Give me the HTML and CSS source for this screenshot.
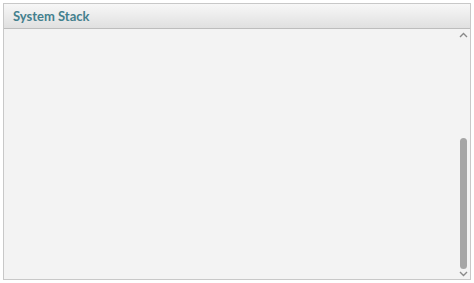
FILE: index.html
```html
<!DOCTYPE html>
<html>
<head>
<meta charset="utf-8">
<link rel="stylesheet" href="styles.css">
</head>
<body>
<div class="panel">
  <div class="header"><span class="title">System Stack</span></div>
  <div class="content">
    <div class="list"></div>
    <div class="scrollbar">
      <svg class="arrow" width="9" height="6" viewBox="0 0 9 6"><path d="M1 5 L4.5 1.5 L8 5" fill="none" stroke="#8a8a8a" stroke-width="1.4"/></svg>
      <div class="track"><div class="thumb"></div></div>
      <svg class="arrow" width="9" height="6" viewBox="0 0 9 6"><path d="M1 1 L4.5 4.5 L8 1" fill="none" stroke="#8a8a8a" stroke-width="1.4"/></svg>
    </div>
  </div>
</div>
</body>
</html>
```
FILE: styles.css
```css
html, body { margin: 0; padding: 0; background: #ffffff; }
body { padding: 3px 3px 3px 3px; width: 474px; height: 283px; box-sizing: border-box; }
.panel {
  width: 468px; height: 277px; box-sizing: border-box;
  border: 1px solid #c8c8c8;
  background: #f3f3f3;
  display: flex; flex-direction: column;
}
.header {
  height: 25px; box-sizing: border-box;
  background: linear-gradient(#f7f7f7, #e0e0e0);
  border-bottom: 1px solid #bdbdbd;
  display: flex; align-items: center;
  padding-left: 9px;
}
.title {
  font-family: "Lato", sans-serif; font-weight: bold; font-size: 13px;
  color: #44808e;
}
.content { flex: 1; display: flex; }
.list { flex: 1; }
.scrollbar {
  width: 12px; display: flex; flex-direction: column; align-items: center;
  padding: 3px 0 2px; margin-right: 1px;
}
.arrow { display: block; }
.track { flex: 1; width: 7px; display: flex; flex-direction: column; justify-content: flex-end; padding: 2px 0; }
.thumb { height: 131px; background: #a6a6a6; border-radius: 3.5px; }
```
